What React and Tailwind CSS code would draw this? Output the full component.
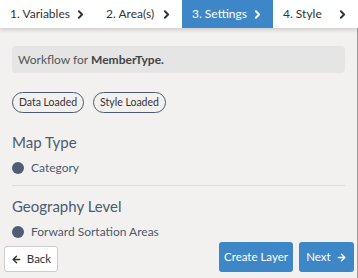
import { ChevronRight, ArrowLeft, ArrowRight } from "lucide-react";

const TABS = [
  { label: "1. Variables", w: "w-[96px]" },
  { label: "2. Area(s)", w: "w-[86px]" },
  { label: "3. Settings", w: "w-[91px]" },
  { label: "4. Style", w: "w-[85px]" },
];

export default function App() {
  return (
    <div
      className="w-[358px] h-[278px] bg-[#f2f1ef] flex flex-col overflow-hidden"
      style={{ fontFamily: "Lato, 'Open Sans', sans-serif" }}
    >
      <div className="h-[28px] bg-white flex shadow-[0_2px_4px_rgba(0,0,0,0.15)] relative z-10">
        {TABS.map((t, i) => (
          <div
            key={t.label}
            className={
              (i === 2 ? "bg-[#3d87c9] text-white " : "text-[#333] ") +
              t.w +
              " shrink-0 whitespace-nowrap flex items-center justify-between pl-[10px] pr-[9px] text-[12px]"
            }
          >
            <span>{t.label}</span>
            <ChevronRight size={13} strokeWidth={3.5} />
          </div>
        ))}
      </div>

      <div className="flex-1 flex flex-col border-r border-[#a0a0a0] px-[12px] pt-[18px]">
        <div className="h-[27px] bg-[#e5e5e5] rounded-[4px] flex items-center px-[6px] text-[12px] text-[#555]">
          Workflow for&nbsp;<b className="text-[#444]">MemberType.</b>
        </div>

        <div className="flex gap-[9px] mt-[19px]">
          <span className="w-[72px] h-[21px] flex items-center justify-center rounded-full border border-[#4d5a6e] text-[10.5px] text-[#333] whitespace-nowrap">
            Data Loaded
          </span>
          <span className="w-[73px] h-[21px] flex items-center justify-center rounded-full border border-[#4d5a6e] text-[10.5px] text-[#333] whitespace-nowrap">
            Style Loaded
          </span>
        </div>

        <div className="mt-[18px] text-[15px] text-[#4b5a72]">Map Type</div>
        <div className="flex items-center gap-[7px] mt-[5px] text-[12px] text-[#4b5a72]">
          <span className="w-[12px] h-[12px] rounded-full bg-[#4f5d75]" />
          Category
        </div>

        <div className="border-t border-[#dcdcdc] mt-[8px]" />

        <div className="mt-[9px] text-[15px] text-[#4b5a72]">Geography Level</div>
        <div className="flex items-center gap-[7px] mt-[6px] text-[12px] text-[#4b5a72]">
          <span className="w-[12px] h-[12px] rounded-full bg-[#4f5d75]" />
          Forward Sortation Areas
        </div>

        <div className="flex items-center mt-auto mb-[6px] -ml-[8px] -mr-[9px]">
          <button className="w-[54px] h-[26px] mt-[4px] flex items-center justify-center gap-[5px] bg-white border border-[#ccc] rounded-[3px] text-[11.5px] text-[#333]">
            <ArrowLeft size={11} strokeWidth={3} />
            Back
          </button>
          <div className="flex-1" />
          <button className="w-[74px] h-[30px] flex items-center justify-center bg-[#3d87c9] rounded-[3px] text-[11.5px] text-white whitespace-nowrap">
            Create Layer
          </button>
          <button className="w-[55px] h-[30px] ml-[6px] flex items-center justify-center gap-[5px] bg-[#3d87c9] rounded-[3px] text-[11.5px] text-white">
            Next
            <ArrowRight size={11} strokeWidth={3} />
          </button>
        </div>
      </div>
    </div>
  );
}
